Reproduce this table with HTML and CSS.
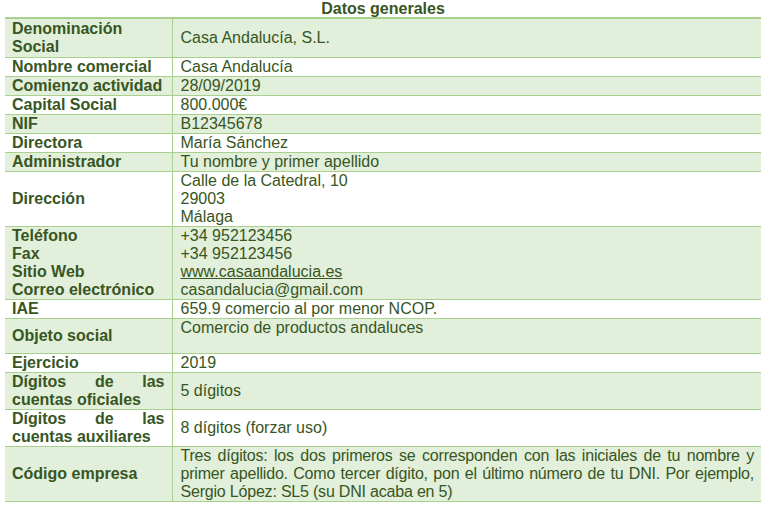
FILE: index.html
```html
<!DOCTYPE html>
<html lang="es">
<head>
<meta charset="utf-8">
<title>Datos generales</title>
<link rel="stylesheet" href="styles.css">
</head>
<body>
<div class="sheet">
  <div class="title">Datos generales</div>
  <table class="data">
    <colgroup><col class="c1"><col class="c2"></colgroup>
    <tbody>
      <tr class="g tall"><th>Denominación<br>Social</th><td>Casa Andalucía, S.L.</td></tr>
      <tr><th>Nombre comercial</th><td>Casa Andalucía</td></tr>
      <tr class="g"><th>Comienzo actividad</th><td>28/09/2019</td></tr>
      <tr><th>Capital Social</th><td>800.000€</td></tr>
      <tr class="g"><th>NIF</th><td>B12345678</td></tr>
      <tr><th>Directora</th><td>María Sánchez</td></tr>
      <tr class="g"><th>Administrador</th><td>Tu nombre y primer apellido</td></tr>
      <tr><th>Dirección</th><td>Calle de la Catedral, 10<br>29003<br>Málaga</td></tr>
      <tr class="g"><th>Teléfono<br>Fax<br>Sitio Web<br>Correo electrónico</th><td>+34 952123456<br>+34 952123456<br><a href="#">www.casaandalucia.es</a><br>casandalucia@gmail.com</td></tr>
      <tr><th>IAE</th><td>659.9 comercio al por menor NCOP.</td></tr>
      <tr class="g obj"><th>Objeto social</th><td class="top">Comercio de productos andaluces</td></tr>
      <tr><th>Ejercicio</th><td>2019</td></tr>
      <tr class="g"><th class="just">Dígitos de las cuentas oficiales</th><td>5 dígitos</td></tr>
      <tr><th class="just">Dígitos de las cuentas auxiliares</th><td>8 dígitos (forzar uso)</td></tr>
      <tr class="g"><th>Código empresa</th><td class="just tight">Tres dígitos: los dos primeros se corresponden con las iniciales de tu nombre y primer apellido. Como tercer dígito, pon el último número de tu DNI. Por ejemplo, Sergio López: SL5 (su DNI acaba en 5)</td></tr>
    </tbody>
  </table>
</div>
</body>
</html>
```
FILE: styles.css
```css
html, body {
  margin: 0;
  padding: 0;
  background: #ffffff;
}
body {
  font-family: "Liberation Sans", Arial, sans-serif;
  font-size: 16px;
  line-height: 18px;
  color: #375623;
}
.sheet {
  padding: 0 5px;
  width: 756px;
}
.title {
  font-weight: bold;
  text-align: center;
  height: 17px;
  line-height: 18px;
}
.data {
  width: 756px;
  border-collapse: collapse;
  table-layout: fixed;
  border-top: 2px solid #a9d08e;
}
.c1 { width: 167px; }
.data tr { border-bottom: 1px solid #a9d08e; }
.data tr.g { background: #e2efda; }
.data th, .data td {
  padding: 0 7px;
  vertical-align: middle;
  text-align: left;
}
.data th {
  font-weight: bold;
  border-right: 1px solid #a9d08e;
}
.data td {
  padding-left: 8px;
}
.data tr.tall th, .data tr.tall td {
  padding-top: 1px;
  padding-bottom: 1px;
}
.data tr.obj th, .data tr.obj td {
  height: 34px;
}
.data td.top {
  vertical-align: top;
}
.data .just {
  text-align: justify;
}
.data .tight {
  letter-spacing: -0.2px;
}
.data a {
  color: #375623;
  text-decoration: underline;
}
```
